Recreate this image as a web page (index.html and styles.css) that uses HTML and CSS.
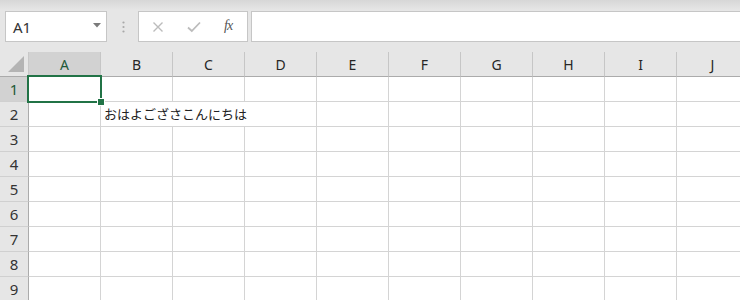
FILE: index.html
```html
<!DOCTYPE html>
<html lang="ja">
<head>
<meta charset="utf-8">
<link rel="stylesheet" href="styles.css">
</head>
<body>
<div class="app">
  <div class="toolbar">
    <div class="namebox">
      <span class="ref">A1</span>
      <svg class="drop" width="8" height="5" viewBox="0 0 8 5"><path d="M0 0H8L4 4.5Z" fill="#7a7a7a"/></svg>
    </div>
    <div class="grip">
      <svg width="3" height="12" viewBox="0 0 3 12"><circle cx="1.5" cy="1.5" r="1.1" fill="#a8a8a8"/><circle cx="1.5" cy="6" r="1.1" fill="#a8a8a8"/><circle cx="1.5" cy="10.5" r="1.1" fill="#a8a8a8"/></svg>
    </div>
    <div class="fbuttons">
      <svg class="btn" width="12" height="12" viewBox="0 0 12 12"><path d="M1.5 1.5L10.5 10.5M10.5 1.5L1.5 10.5" stroke="#bcbcbc" stroke-width="1.4" fill="none"/></svg>
      <svg class="btn" width="14" height="12" viewBox="0 0 14 12"><path d="M1 6.5L4.8 10L13 1.5" stroke="#bcbcbc" stroke-width="1.8" fill="none"/></svg>
      <span class="fx">fx</span>
    </div>
    <div class="formula"></div>
  </div>
  <div class="sheet">
    <div class="grid">
      <div class="corner"><svg width="18" height="17" viewBox="0 0 18 17"><path d="M17 0V16H1Z" fill="#b4b4b4"/></svg></div>
      <div class="ch sel">A</div><div class="ch">B</div><div class="ch">C</div><div class="ch">D</div><div class="ch">E</div><div class="ch">F</div><div class="ch">G</div><div class="ch">H</div><div class="ch">I</div><div class="ch">J</div>

      <div class="rh sel">1</div><div class="c"></div><div class="c"></div><div class="c"></div><div class="c"></div><div class="c"></div><div class="c"></div><div class="c"></div><div class="c"></div><div class="c"></div><div class="c"></div>
      <div class="rh">2</div><div class="c"></div><div class="c text">おはよござさこんにちは</div><div class="c"></div><div class="c"></div><div class="c"></div><div class="c"></div><div class="c"></div><div class="c"></div>
      <div class="rh">3</div><div class="c"></div><div class="c"></div><div class="c"></div><div class="c"></div><div class="c"></div><div class="c"></div><div class="c"></div><div class="c"></div><div class="c"></div><div class="c"></div>
      <div class="rh">4</div><div class="c"></div><div class="c"></div><div class="c"></div><div class="c"></div><div class="c"></div><div class="c"></div><div class="c"></div><div class="c"></div><div class="c"></div><div class="c"></div>
      <div class="rh">5</div><div class="c"></div><div class="c"></div><div class="c"></div><div class="c"></div><div class="c"></div><div class="c"></div><div class="c"></div><div class="c"></div><div class="c"></div><div class="c"></div>
      <div class="rh">6</div><div class="c"></div><div class="c"></div><div class="c"></div><div class="c"></div><div class="c"></div><div class="c"></div><div class="c"></div><div class="c"></div><div class="c"></div><div class="c"></div>
      <div class="rh">7</div><div class="c"></div><div class="c"></div><div class="c"></div><div class="c"></div><div class="c"></div><div class="c"></div><div class="c"></div><div class="c"></div><div class="c"></div><div class="c"></div>
      <div class="rh">8</div><div class="c"></div><div class="c"></div><div class="c"></div><div class="c"></div><div class="c"></div><div class="c"></div><div class="c"></div><div class="c"></div><div class="c"></div><div class="c"></div>
      <div class="rh">9</div><div class="c"></div><div class="c"></div><div class="c"></div><div class="c"></div><div class="c"></div><div class="c"></div><div class="c"></div><div class="c"></div><div class="c"></div><div class="c"></div>
    </div>
    <div class="selection"></div>
    <div class="handle"></div>
  </div>
</div>
</body>
</html>
```
FILE: styles.css
```css
html, body {
  margin: 0;
  padding: 0;
}
body {
  width: 740px;
  height: 300px;
  overflow: hidden;
  background: #e6e6e6;
  font-family: "Noto Sans", "Noto Sans CJK JP", sans-serif;
}
.app {
  width: 740px;
  height: 300px;
  overflow: hidden;
  background: linear-gradient(#d7d7d7 0px, #e6e6e6 10px, #e6e6e6 100%);
}
.toolbar {
  display: flex;
  align-items: stretch;
  height: 31px;
  margin-top: 11px;
  padding-left: 5px;
}
.namebox {
  box-sizing: border-box;
  width: 102px;
  background: #fff;
  border: 1px solid #c6c6c6;
  display: flex;
  align-items: center;
  justify-content: space-between;
  padding: 0 5px 0 7px;
}
.ref {
  font-size: 15px;
  color: #333;
  line-height: 1;
  padding-top: 2px;
}
.drop {
  margin-top: -2px;
}
.grip {
  width: 31px;
  display: flex;
  align-items: center;
  justify-content: center;
  padding-left: 1px;
  box-sizing: border-box;
}
.fbuttons {
  box-sizing: border-box;
  width: 110px;
  background: #fff;
  border: 1px solid #c6c6c6;
  display: flex;
  align-items: center;
  padding-left: 13px;
  gap: 0;
}
.fbuttons .btn:first-child {
  margin-right: 23px;
}
.fbuttons .btn:nth-child(2) {
  margin-right: 23px;
}
.fx {
  font-family: "Liberation Serif", serif;
  font-style: italic;
  font-size: 14px;
  color: #555;
  letter-spacing: -1px;
  padding-bottom: 2px;
}
.formula {
  flex: 1;
  margin-left: 3px;
  background: #fff;
  border: 1px solid #c6c6c6;
  border-right: none;
}
.sheet {
  position: relative;
  margin-top: 10px;
}
.grid {
  display: grid;
  grid-template-columns: 29px repeat(10, 72px);
  grid-auto-rows: 25px;
  width: 749px;
}
.grid > div {
  box-sizing: border-box;
}
.corner {
  background: #e6e6e6;
  border-right: 1px solid #c8c8c8;
  border-bottom: 1px solid #ababab;
  display: flex;
  align-items: flex-end;
  justify-content: flex-end;
  padding: 0 3px 3px 0;
}
.corner svg {
  display: block;
}
.ch {
  background: #e6e6e6;
  border-right: 1px solid #c6c6c6;
  border-bottom: 1px solid #ababab;
  display: flex;
  align-items: center;
  justify-content: center;
  font-size: 14px;
  color: #262626;
  padding-top: 1px;
}
.ch.sel {
  background: #d2d2d2;
  color: #1e5a38;
}
.rh {
  background: #e6e6e6;
  border-right: 1px solid #ababab;
  border-bottom: 1px solid #d0d0d0;
  display: flex;
  align-items: center;
  justify-content: center;
  font-size: 15px;
  color: #333;
}
.rh.sel {
  background: #d2d2d2;
  color: #1e5a38;
}
.c {
  background: #fff;
  border-right: 1px solid #d4d4d4;
  border-bottom: 1px solid #d4d4d4;
}
.c.text {
  grid-column: span 3;
  font-family: "Noto Sans CJK JP", sans-serif;
  font-size: 13px;
  color: #222;
  display: flex;
  align-items: flex-end;
  padding: 0 0 6px 3px;
  line-height: 1;
  white-space: nowrap;
}
.selection {
  position: absolute;
  left: 27px;
  top: 23px;
  width: 75px;
  height: 28px;
  box-sizing: border-box;
  border: 2px solid #217346;
}
.handle {
  position: absolute;
  left: 98px;
  top: 47px;
  width: 6px;
  height: 6px;
  background: #217346;
  box-shadow: 0 0 0 1px #fff;
}
```
